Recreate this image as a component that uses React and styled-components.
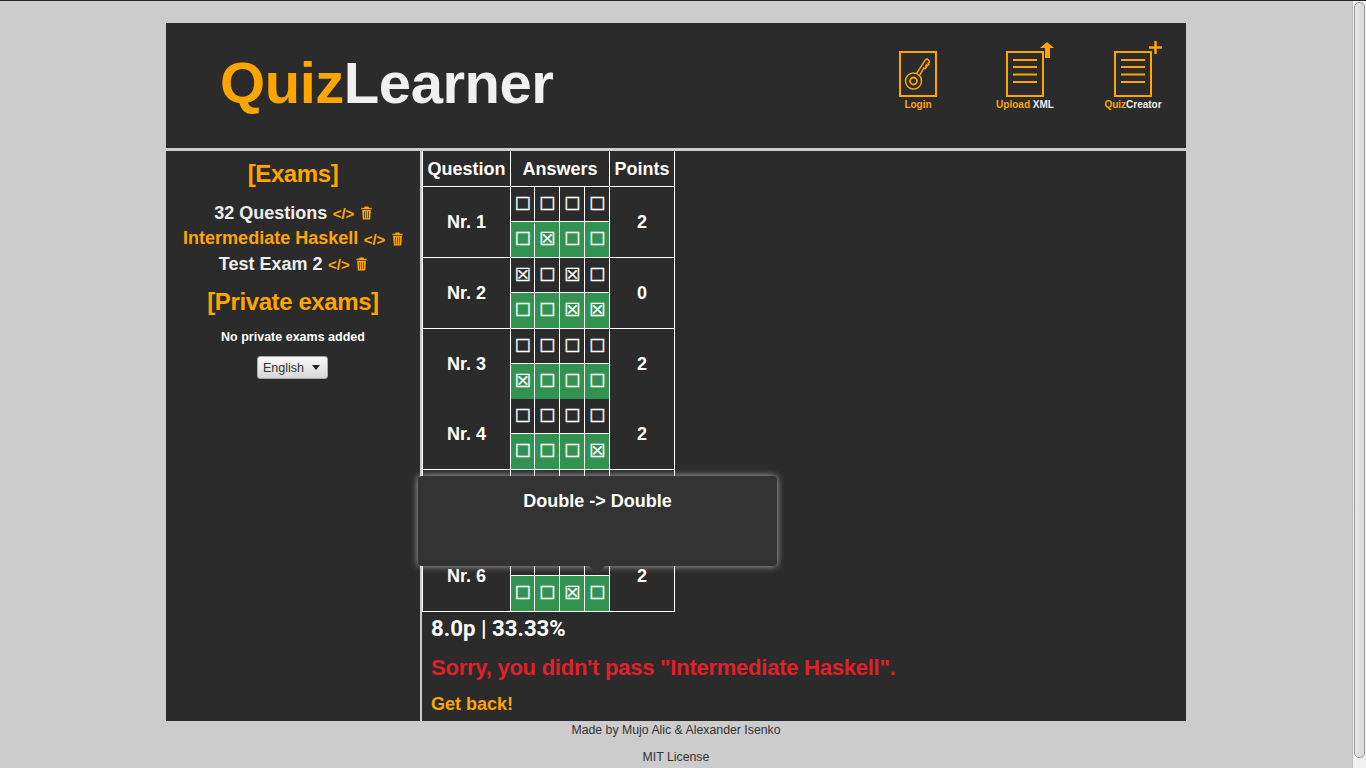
import React from "react";
import styled, { createGlobalStyle } from "styled-components";

const ORANGE = "#ffa500";
const PANEL = "#2b2b2b";

const GlobalStyle = createGlobalStyle`
  html, body { margin: 0; padding: 0; height: 100%; overflow: hidden; }
  body { background: #cccccc; font-family: "Liberation Sans", Arial, sans-serif; }
`;

const Screen = styled.div`
  display: flex;
  height: 768px;
  border-top: 1px solid #222;
  box-sizing: border-box;
`;
const Page = styled.div`
  flex: 1;
  min-width: 0;
  padding-top: 22px;
`;
const Scrollbar = styled.div`
  width: 14px;
  flex: none;
  box-sizing: border-box;
  background: #f1f1f1;
  border-left: 1px solid #bdbdbd;
  padding: 1px 1px 0 1px;
`;
const ScrollThumb = styled.div`
  height: 756px;
  box-sizing: border-box;
  border: 1px solid #999;
  border-radius: 5px;
  background: linear-gradient(to right, #e6e6e6, #d8d8d8);
`;
const Wrapper = styled.div`
  width: 1020px;
  margin: 0 auto;
  background: ${PANEL};
`;
const Header = styled.header`
  height: 125px;
  box-sizing: border-box;
  display: flex;
  align-items: center;
  justify-content: space-between;
  padding: 0 24px 9px 54px;
`;
const Logo = styled.div`
  margin-top: 4px;
  font-size: 58px;
  font-weight: bold;
  letter-spacing: -0.45px;
  line-height: 1;
  color: #f0f0f0;
  span { color: ${ORANGE}; }
`;
const Nav = styled.nav`
  display: flex;
  gap: 50px;
  margin-top: -6px;
`;
const NavItem = styled.a`
  width: 58px;
  display: flex;
  flex-direction: column;
  align-items: center;
  font-size: 10px;
  font-weight: bold;
  color: ${ORANGE};
  white-space: nowrap;
  &:first-child { margin-right: -1px; }
  svg { display: block; overflow: visible; }
  span { color: #eeeeee; }
`;
const Divider = styled.div`
  height: 3px;
  background: #cccccc;
`;
const Body = styled.div`
  display: flex;
  height: 570px;
`;
const Sidebar = styled.aside`
  width: 254px;
  flex: none;
  border-right: 2px solid #cccccc;
  display: flex;
  flex-direction: column;
  align-items: center;
  padding-top: 9px;
`;
const ExamsTitle = styled.h2`
  margin: 0 0 12.7px;
  font-size: 24px;
  line-height: 28px;
  letter-spacing: -0.4px;
  color: ${ORANGE};
`;
const ExamRow = styled.div`
  display: flex;
  align-items: center;
  gap: 5.5px;
  height: 25.5px;
  font-size: 18px;
  font-weight: bold;
  color: ${p => (p.$active ? ORANGE : "#eeeeee")};
`;
const CodeMark = styled.span`
  font-size: 15px;
  color: ${ORANGE};
  margin: 1px 1px 0 0;
`;
const PrivateTitle = styled(ExamsTitle)`
  margin: 11.3px 0 14px;
`;
const Note = styled.p`
  margin: 0 0 12px;
  font-size: 12.5px;
  line-height: 14px;
  font-weight: bold;
  color: #ffffff;
`;
const LangSelect = styled.button`
  width: 71px;
  height: 23px;
  margin-right: 1px;
  box-sizing: border-box;
  padding: 0 7px 0 5px;
  display: flex;
  align-items: center;
  justify-content: space-between;
  font-family: inherit;
  font-size: 12.5px;
  color: #333333;
  border: 1px solid #aaaaaa;
  border-radius: 3px;
  background: linear-gradient(to bottom, #fafafa, #d8d8d8);
`;
const Caret = styled.i`
  width: 0;
  height: 0;
  border-left: 4.5px solid transparent;
  border-right: 4.5px solid transparent;
  border-top: 5px solid #222;
`;
const Content = styled.main`
  flex: 1;
  min-width: 0;
`;
const TableWrap = styled.div`
  position: relative;
  width: 253px;
`;
const Table = styled.table`
  border-collapse: collapse;
  table-layout: fixed;
  width: 253px;
  color: #ffffff;
  font-weight: bold;
`;
const HeadCell = styled.th`
  height: 35px;
  padding: 2px 0 0;
  box-sizing: border-box;
  font-size: 18px;
  text-align: center;
  border: 1px solid #ffffff;
  border-top: 0;
`;
const LabelCell = styled.td`
  padding: 1px 0 0;
  font-size: 18px;
  text-align: center;
  border: 1px solid #ffffff;
  border-top-style: ${p => (p.$open ? "hidden" : "solid")};
`;
const BoxCell = styled.td`
  height: 34.5px;
  padding: 0;
  text-align: center;
  font-family: "DejaVu Sans", sans-serif;
  font-weight: normal;
  font-size: 18px;
  line-height: 20px;
  -webkit-text-stroke: 0.35px currentColor;
  background: ${p => (p.$solution ? "#31934f" : "transparent")};
  border: 1px solid #ffffff;
  border-top-style: ${p => (p.$open ? "hidden" : "solid")};
`;
const Tooltip = styled.div`
  position: absolute;
  left: -4px;
  top: 325px;
  width: 359px;
  height: 90px;
  box-sizing: border-box;
  padding-top: 15px;
  background: #333333;
  border-radius: 4px;
  box-shadow: 0 0 7px rgba(255, 255, 255, 0.65);
  color: #ffffff;
  font-size: 18px;
  line-height: 21px;
  font-weight: bold;
  text-align: center;
  &::after {
    content: "";
    position: absolute;
    left: 171px;
    top: 90px;
    border-left: 8px solid transparent;
    border-right: 8px solid transparent;
    border-top: 8px solid #333333;
  }
`;
const Score = styled.div`
  margin: 3px 0 0 9px;
  font-family: Roboto, sans-serif;
  font-size: 22.2px;
  line-height: 26px;
  font-weight: bold;
  color: #ffffff;
`;
const Failed = styled.div`
  margin: 14px 0 0 9px;
  font-size: 22px;
  line-height: 26px;
  letter-spacing: -0.24px;
  font-weight: bold;
  color: #e0202a;
`;
const BackLink = styled.a`
  display: block;
  margin: 13px 0 0 9px;
  font-size: 18px;
  line-height: 21px;
  font-weight: bold;
  color: ${ORANGE};
`;
const Footer = styled.footer`
  text-align: center;
  font-size: 12.3px;
  line-height: 14px;
  color: #333333;
  p { margin: 2px 0 13px; }
`;

const TrashIcon = () => (
  <svg width="11" height="14" viewBox="0 0 12 14" preserveAspectRatio="none" fill={ORANGE}>
    <path d="M4 0.5h4l0.6 1.2h3v1.6H0.400V1.700h3z" />
    <path d="M1.200 4h9.600l-0.800 9.500H2zM3.400 5.200l0.300 7h0.700l-0.200-7zM5.650 5.200v7h0.700v-7zM7.800 5.200l-0.200 7h0.700l0.300-7z" fillRule="evenodd" />
  </svg>
);

const PageFrame = () => (
  <>
    <rect x="12" y="6" width="36" height="44" fill={PANEL} stroke={ORANGE} strokeWidth="2" />
    <path d="M18 14h24M18 21h24M18 28.500h24M18 36h24" stroke={ORANGE} strokeWidth="2" />
  </>
);

const LoginIcon = () => (
  <svg width="60" height="53" viewBox="0 0 60 53" fill="none">
    <rect x="12" y="6" width="36" height="44" stroke={ORANGE} strokeWidth="2" />
    <g stroke={ORANGE} strokeWidth="1.500">
      <circle cx="25.500" cy="35" r="8" />
      <circle cx="25.500" cy="35" r="3.500" strokeWidth="1.800" />
      <path d="M28.600 27.300L37.400 13.800L39 13L41.400 14.800L41.200 16.600L40 17.200L41 18.200L39.600 19.600L38.300 18.800L37.600 20.200L38.500 21L37 22.700L35.800 22L31.800 29.200" />
    </g>
  </svg>
);

const UploadIcon = () => (
  <svg width="60" height="53" viewBox="0 0 60 53" fill="none">
    <PageFrame />
    <path d="M52 -4L59 2H55V12H50V2H45z" fill={ORANGE} />
  </svg>
);

const CreatorIcon = () => (
  <svg width="60" height="53" viewBox="0 0 60 53" fill="none">
    <PageFrame />
    <path d="M52.500 -5V8M46 1.500H59" stroke={ORANGE} strokeWidth="2.500" />
  </svg>
);

const exams = [
  { name: "32 Questions" },
  { name: "Intermediate Haskell", active: true },
  { name: "Test Exam 2" },
];

const questions = [
  { nr: 1, given: [0, 0, 0, 0], solution: [0, 1, 0, 0], points: 2 },
  { nr: 2, given: [1, 0, 1, 0], solution: [0, 0, 1, 1], points: 0 },
  { nr: 3, given: [0, 0, 0, 0], solution: [1, 0, 0, 0], points: 2 },
  { nr: 4, given: [0, 0, 0, 0], solution: [0, 0, 0, 1], points: 2, open: true },
  { nr: 5, given: [0, 0, 0, 0], solution: [0, 0, 0, 0], points: 0 },
  { nr: 6, given: [0, 0, 0, 0], solution: [0, 0, 1, 0], points: 2 },
];

const mark = v => (v ? "☒" : "☐");

const QuestionRows = ({ q }) => (
  <>
    <tr>
      <LabelCell rowSpan={2} $open={q.open}>Nr. {q.nr}</LabelCell>
      {q.given.map((v, i) => <BoxCell key={i} $open={q.open}>{mark(v)}</BoxCell>)}
      <LabelCell rowSpan={2} $open={q.open}>{q.points}</LabelCell>
    </tr>
    <tr>
      {q.solution.map((v, i) => <BoxCell key={i} $solution>{mark(v)}</BoxCell>)}
    </tr>
  </>
);

export default function App() {
  return (
    <Screen>
      <GlobalStyle />
      <Page>
        <Wrapper>
          <Header>
            <Logo><span>Quiz</span>Learner</Logo>
            <Nav>
              <NavItem><LoginIcon /><div>Login</div></NavItem>
              <NavItem><UploadIcon /><div>Upload <span>XML</span></div></NavItem>
              <NavItem><CreatorIcon /><div>Quiz<span>Creator</span></div></NavItem>
            </Nav>
          </Header>
          <Divider />
          <Body>
            <Sidebar>
              <ExamsTitle>[Exams]</ExamsTitle>
              {exams.map(e => (
                <ExamRow key={e.name} $active={e.active}>
                  {e.name}
                  <CodeMark>&lt;/&gt;</CodeMark>
                  <TrashIcon />
                </ExamRow>
              ))}
              <PrivateTitle>[Private exams]</PrivateTitle>
              <Note>No private exams added</Note>
              <LangSelect>English<Caret /></LangSelect>
            </Sidebar>
            <Content>
              <TableWrap>
                <Table>
                  <colgroup>
                    <col width="88" />
                    <col width="24" />
                    <col width="25" />
                    <col width="25" />
                    <col width="25" />
                    <col width="65" />
                  </colgroup>
                  <thead>
                    <tr>
                      <HeadCell>Question</HeadCell>
                      <HeadCell colSpan={4}>Answers</HeadCell>
                      <HeadCell>Points</HeadCell>
                    </tr>
                  </thead>
                  <tbody>
                    {questions.map(q => <QuestionRows key={q.nr} q={q} />)}
                  </tbody>
                </Table>
                <Tooltip>Double -&gt; Double</Tooltip>
              </TableWrap>
              <Score>8.0p | 33.33%</Score>
              <Failed>Sorry, you didn't pass "Intermediate Haskell".</Failed>
              <BackLink>Get back!</BackLink>
            </Content>
          </Body>
        </Wrapper>
        <Footer>
          <p>Made by Mujo Alic &amp; Alexander Isenko</p>
          <p>MIT License</p>
        </Footer>
      </Page>
      <Scrollbar><ScrollThumb /></Scrollbar>
    </Screen>
  );
}
